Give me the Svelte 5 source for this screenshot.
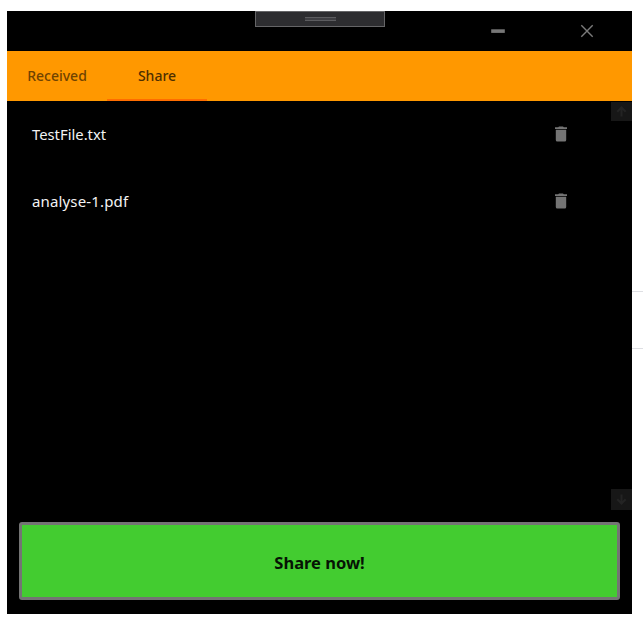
<script>
  const tabs = [
    { label: 'Received', active: false },
    { label: 'Share', active: true }
  ];
  const files = ['TestFile.txt', 'analyse-1.pdf'];
</script>

<div class="page">
  <main class="window">
    <header class="titlebar">
      <div class="grip"><span></span></div>
      <button class="control minimize" aria-label="Minimize">
        <svg width="14" height="4" viewBox="0 0 14 4"><rect x="0.2" y="0.3" width="13.6" height="3.6" fill="#777" /></svg>
      </button>
      <button class="control close" aria-label="Close">
        <svg width="14" height="14" viewBox="0 0 14 14"><path d="M1.3 1.3 12.7 12.7M12.7 1.3 1.3 12.7" stroke="#7b7b7b" stroke-width="1.4" /></svg>
      </button>
    </header>

    <nav class="tabs">
      {#each tabs as tab}
        <button class="tab" class:active={tab.active}><span>{tab.label}</span></button>
      {/each}
    </nav>

    <section class="content">
      <ul class="files">
        {#each files as file, i}
          <li>
            <span class="name" class:long={i === 1}>{file}</span>
            <button class="trash" aria-label="Delete">
              <svg width="12" height="16" viewBox="0 0 12 16" fill="#747474">
                <path d="M0 1.300H3.200L4 .400H8L8.800 1.300H12V2.900H0ZM.800 3.800H11.200V14A1.500 1.500 0 0 1 9.700 15.500H2.300A1.500 1.500 0 0 1 .800 14Z" />
              </svg>
            </button>
          </li>
        {/each}
      </ul>
      <div class="scrollbar">
        <button aria-label="Scroll up">
          <svg width="11" height="11" viewBox="0 0 11 11"><path d="M5.500 10.500V2M1.300 5.700 5.500 1.500 9.700 5.700" /></svg>
        </button>
        <button aria-label="Scroll down">
          <svg width="11" height="11" viewBox="0 0 11 11"><path d="M5.500 .5V9M1.300 5.300 5.500 9.500 9.700 5.300" /></svg>
        </button>
      </div>
    </section>

    <footer><button class="share"><span>Share now!</span></button></footer>
  </main>
  <aside class="edge"></aside>
</div>

<style>
  :global(body) { margin: 0; background: #fff; }
  .page {
    box-sizing: border-box;
    width: 643px;
    height: 626px;
    padding: 11px 0 12px 7px;
    display: grid;
    grid-template-columns: 625px 11px;
    background: #fff;
    font-family: "Noto Sans", "Open Sans", sans-serif;
    overflow: hidden;
  }
  button {
    margin: 0;
    padding: 0;
    border: 0;
    background: none;
    font: inherit;
    color: inherit;
    display: flex;
    align-items: center;
    justify-content: center;
  }
  svg { display: block; }
  .window {
    height: 603px;
    display: grid;
    grid-template-rows: 40px 50px 409px 104px;
    background: #000;
  }
  .titlebar {
    display: grid;
    grid-template-columns: 247px 131px 68px 90px 88px;
  }
  .grip {
    box-sizing: border-box;
    height: 16px;
    width: 130px;
    border: 1px solid #656567;
    background: #2d2d30;
    display: flex;
    justify-content: center;
    grid-column: 2;
    justify-self: end;
  }
  .grip span {
    box-sizing: border-box;
    width: 31px;
    height: 4px;
    margin-top: 5px;
    border: solid #5c5c5f;
    border-width: 1px 0;
    background: #3e3e42;
  }
  .control { height: 40px; }
  .minimize { grid-column: 4; }
  .tabs { display: flex; background: #ff9800; }
  .tab {
    box-sizing: border-box;
    width: 100px;
    height: 50px;
    border-bottom: 2px solid transparent;
    font-size: 14px;
    font-weight: 500;
    color: #704300;
  }
  .tab.active { border-bottom-color: #ff6d00; color: #4d2e00; }
  .content { display: grid; grid-template-columns: 604px 21px; }
  .files { list-style: none; margin: 0; padding: 0; }
  li {
    height: 67.500px;
    box-sizing: border-box;
    padding: 0 44px 2px 25px;
    display: flex;
    align-items: center;
    justify-content: space-between;
    color: #f3f3f3;
    font-size: 14.800px;
  }
  .name { white-space: nowrap; }
  .name.long { font-size: 15px; letter-spacing: .150px; }
  .scrollbar {
    padding-top: 1px;
    display: flex;
    flex-direction: column;
    justify-content: space-between;
  }
  .scrollbar button { width: 21px; height: 19px; background: #171717; }
  .scrollbar button:last-child { height: 21px; }
  .scrollbar path { fill: none; stroke: #242424; stroke-width: 2; }
  footer { padding: 12px; }
  .share {
    box-sizing: border-box;
    width: 601px;
    height: 78px;
    border: 3px solid #747474;
    border-radius: 3px;
    background: #43cc30;
    color: #061304;
    font-size: 16.500px;
    font-weight: 700;
  }
  .share span { padding-top: 3px; }
  .edge {
    box-sizing: border-box;
    height: 58px;
    margin-top: 280px;
    border: solid #dedfe3;
    border-width: 1px 0;
  }
</style>
